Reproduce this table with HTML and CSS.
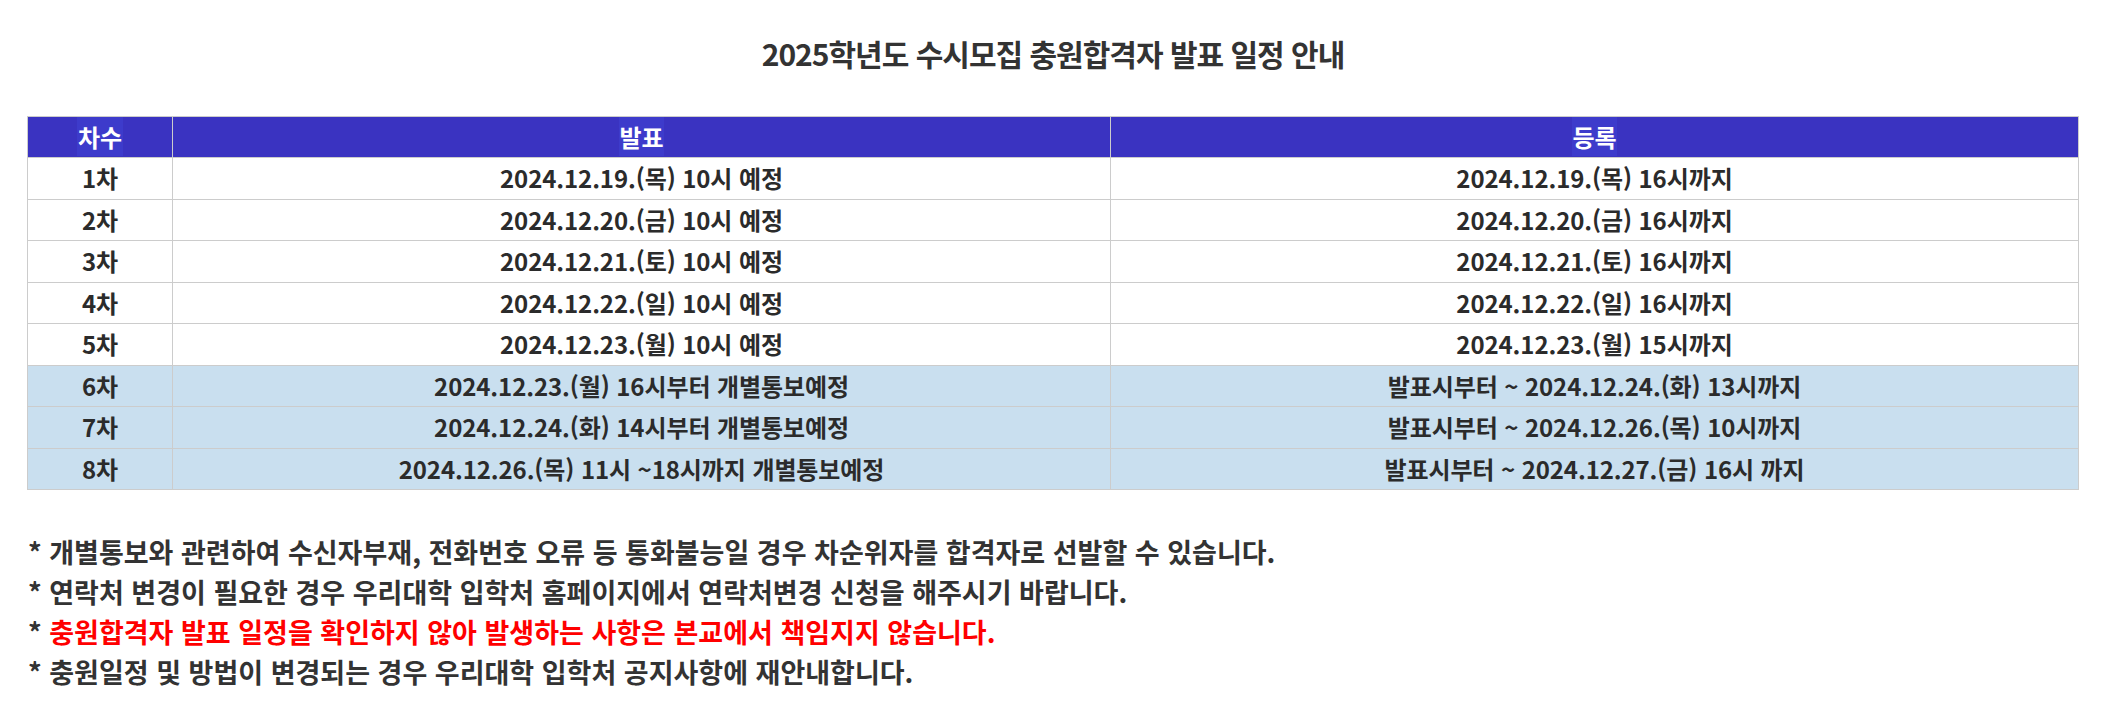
FILE: index.html
```html
<!DOCTYPE html>
<html lang="ko">
<head>
<meta charset="utf-8">
<link rel="stylesheet" href="styles.css">
</head>
<body>
<div class="page">
  <h2 class="title">2025학년도 수시모집 충원합격자 발표 일정 안내</h2>
  <table class="schedule">
    <colgroup>
      <col class="c-round">
      <col class="c-announce">
      <col class="c-register">
    </colgroup>
    <thead>
      <tr><th><span>차수</span></th><th><span>발표</span></th><th><span>등록</span></th></tr>
    </thead>
    <tbody>
      <tr><td>1차</td><td>2024.12.19.(목) 10시 예정</td><td>2024.12.19.(목) 16시까지</td></tr>
      <tr><td>2차</td><td>2024.12.20.(금) 10시 예정</td><td>2024.12.20.(금) 16시까지</td></tr>
      <tr><td>3차</td><td>2024.12.21.(토) 10시 예정</td><td>2024.12.21.(토) 16시까지</td></tr>
      <tr><td>4차</td><td>2024.12.22.(일) 10시 예정</td><td>2024.12.22.(일) 16시까지</td></tr>
      <tr><td>5차</td><td>2024.12.23.(월) 10시 예정</td><td>2024.12.23.(월) 15시까지</td></tr>
      <tr class="hl"><td>6차</td><td>2024.12.23.(월) 16시부터 개별통보예정</td><td>발표시부터 ~ 2024.12.24.(화) 13시까지</td></tr>
      <tr class="hl"><td>7차</td><td>2024.12.24.(화) 14시부터 개별통보예정</td><td>발표시부터 ~ 2024.12.26.(목) 10시까지</td></tr>
      <tr class="hl"><td>8차</td><td>2024.12.26.(목) 11시 ~18시까지 개별통보예정</td><td>발표시부터 ~ 2024.12.27.(금) 16시 까지</td></tr>
    </tbody>
  </table>
  <ul class="notes">
    <li>* 개별통보와 관련하여 수신자부재, 전화번호 오류 등 통화불능일 경우 차순위자를 합격자로 선발할 수 있습니다.</li>
    <li>* 연락처 변경이 필요한 경우 우리대학 입학처 홈페이지에서 연락처변경 신청을 해주시기 바랍니다.</li>
    <li>* <span class="red">충원합격자 발표 일정을 확인하지 않아 발생하는 사항은 본교에서 책임지지 않습니다.</span></li>
    <li>* 충원일정 및 방법이 변경되는 경우 우리대학 입학처 공지사항에 재안내합니다.</li>
  </ul>
</div>
</body>
</html>
```
FILE: styles.css
```css
html, body {
  margin: 0;
  padding: 0;
  background: #ffffff;
}
body {
  font-family: "Noto Sans CJK KR", "Noto Sans", sans-serif;
  color: #333333;
}
.page {
  padding: 28px 31px 0 27px;
}
.title {
  margin: 0 0 38px;
  text-align: center;
  font-size: 30px;
  font-weight: 700;
  line-height: 50px;
  color: #333333;
  letter-spacing: -1px;
}
.schedule {
  width: 100%;
  border-collapse: collapse;
  table-layout: fixed;
}
.c-round { width: 145px; }
.c-announce { width: 938px; }
.schedule th,
.schedule td {
  border: 1px solid #cccccc;
  text-align: center;
  font-size: 24px;
  font-weight: 700;
  height: 40.5px;
  padding: 0;
  line-height: 30px;
  letter-spacing: -0.1px;
}
.schedule th {
  height: 40px;
  background: #3a33c1;
  color: #ffffff;
}
.schedule th span {
  background: #3d3bcb;
  padding: 2px 1px;
}
.schedule td {
  color: #2b2b2b;
}
.schedule tr.hl td {
  background: #c9dfef;
}
.notes {
  list-style: none;
  margin: 42px 0 0;
  padding: 0 0 0 1px;
}
.notes li {
  font-size: 27px;
  font-weight: 700;
  line-height: 40px;
  color: #333333;
  letter-spacing: 0;
}
.notes .red {
  color: #ff0000;
}
```
